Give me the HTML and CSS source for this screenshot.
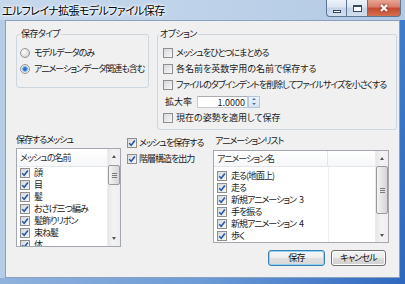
FILE: index.html
```html
<!DOCTYPE html>
<html lang="ja">
<head>
  <meta charset="UTF-8">
  <title>エルフレイナ拡張モデルファイル保存</title>
  <link rel="stylesheet" href="styles.css">
</head>
<body>
  <div class="window">
    <div class="titlebar">
      <span class="title">エルフレイナ拡張モデルファイル保存</span>
      <div class="caption">
        <span class="cap min"><i></i></span>
        <span class="cap max"><i></i></span>
        <span class="cap close">
          <svg viewBox="0 0 12 10"><path d="M3 2 9 8 M9 2 3 8"/></svg>
        </span>
      </div>
    </div>

    <div class="frame">
      <div class="client">
        <!-- 上段 -->
        <div class="top-row">
          <fieldset class="group type">
            <legend>保存タイプ</legend>
            <div class="group-body">
              <div class="row"><span class="radio"></span>モデルデータのみ</div>
              <div class="row"><span class="radio on"></span>アニメーションデータ関連も含む</div>
            </div>
          </fieldset>

          <fieldset class="group options">
            <legend>オプション</legend>
            <div class="group-body">
              <div class="row"><span class="check"></span>メッシュをひとつにまとめる</div>
              <div class="row kanji"><span class="check"></span>各名前を英数字用の名前で保存する</div>
              <div class="row"><span class="check"></span>ファイルのタブインデントを削除してファイルサイズを小さくする</div>
              <div class="row scale">
                <span class="scale-label">拡大率</span>
                <span class="edit">1.0000</span>
                <span class="spin"><i class="up"></i><i class="down"></i></span>
              </div>
              <div class="row kanji"><span class="check"></span>現在の姿勢を適用して保存</div>
            </div>
          </fieldset>
        </div>

        <!-- 下段 -->
        <div class="bottom-row">
          <div class="mesh-col">
            <div class="cap-label">保存するメッシュ</div>
            <div class="listview mesh">
              <div class="lv-main">
                <div class="lv-head"><span class="col1">メッシュの名前</span></div>
                <div class="lv-rows">
                  <div class="lv-row"><span class="check on"><svg viewBox="0 0 8 8"><path d="M1.2 4.2 3.2 6.2 6.9 1.4"/></svg></span>顔</div>
                  <div class="lv-row"><span class="check on"><svg viewBox="0 0 8 8"><path d="M1.2 4.2 3.2 6.2 6.9 1.4"/></svg></span>目</div>
                  <div class="lv-row"><span class="check on"><svg viewBox="0 0 8 8"><path d="M1.2 4.2 3.2 6.2 6.9 1.4"/></svg></span>髪</div>
                  <div class="lv-row"><span class="check on"><svg viewBox="0 0 8 8"><path d="M1.2 4.2 3.2 6.2 6.9 1.4"/></svg></span>おさげ三つ編み</div>
                  <div class="lv-row"><span class="check on"><svg viewBox="0 0 8 8"><path d="M1.2 4.2 3.2 6.2 6.9 1.4"/></svg></span>髪飾りリボン</div>
                  <div class="lv-row"><span class="check on"><svg viewBox="0 0 8 8"><path d="M1.2 4.2 3.2 6.2 6.9 1.4"/></svg></span>束ね髪</div>
                  <div class="lv-row"><span class="check on"><svg viewBox="0 0 8 8"><path d="M1.2 4.2 3.2 6.2 6.9 1.4"/></svg></span>体</div>
                </div>
              </div>
              <div class="vscroll">
                <span class="arrow up"></span>
                <div class="track"><span class="thumb"></span></div>
                <span class="arrow down"></span>
              </div>
            </div>
          </div>

          <div class="mid-col">
            <div class="row"><span class="check on"><svg viewBox="0 0 8 8"><path d="M1.2 4.2 3.2 6.2 6.9 1.4"/></svg></span>メッシュを保存する</div>
            <div class="row"><span class="check on"><svg viewBox="0 0 8 8"><path d="M1.2 4.2 3.2 6.2 6.9 1.4"/></svg></span>階層構造を出力</div>
          </div>

          <div class="anim-col">
            <div class="cap-label">アニメーションリスト</div>
            <div class="listview anim">
              <div class="lv-main">
                <div class="lv-head"><span class="col1">アニメーション名</span><span class="col2"></span></div>
                <div class="lv-rows">
                  <div class="lv-row"><span class="check on"><svg viewBox="0 0 8 8"><path d="M1.2 4.2 3.2 6.2 6.9 1.4"/></svg></span>走る(地面上)</div>
                  <div class="lv-row"><span class="check on"><svg viewBox="0 0 8 8"><path d="M1.2 4.2 3.2 6.2 6.9 1.4"/></svg></span>走る</div>
                  <div class="lv-row"><span class="check on"><svg viewBox="0 0 8 8"><path d="M1.2 4.2 3.2 6.2 6.9 1.4"/></svg></span>新規アニメーション 3</div>
                  <div class="lv-row"><span class="check on"><svg viewBox="0 0 8 8"><path d="M1.2 4.2 3.2 6.2 6.9 1.4"/></svg></span>手を振る</div>
                  <div class="lv-row"><span class="check on"><svg viewBox="0 0 8 8"><path d="M1.2 4.2 3.2 6.2 6.9 1.4"/></svg></span>新規アニメーション 4</div>
                  <div class="lv-row"><span class="check on"><svg viewBox="0 0 8 8"><path d="M1.2 4.2 3.2 6.2 6.9 1.4"/></svg></span>歩く</div>
                </div>
              </div>
              <div class="vscroll">
                <span class="arrow up"></span>
                <div class="track"><span class="thumb"></span></div>
                <span class="arrow down"></span>
              </div>
            </div>
            <div class="buttons">
              <button class="btn default">保存</button>
              <button class="btn">キャンセル</button>
            </div>
          </div>
        </div>
      </div>
    </div>
  </div>
</body>
</html>
```

FILE: styles.css
```css
* {
  margin: 0;
  padding: 0;
  box-sizing: border-box;
}
body {
  width: 405px;
  height: 284px;
  overflow: hidden;
  font-family: "Noto Sans CJK JP", "Noto Sans", sans-serif;
  font-size: 9px;
  line-height: 12px;
  letter-spacing: -1px;
  word-spacing: 2px;
  font-feature-settings: "palt";
  color: #1a1a1a;
}
.window {
  width: 405px;
  height: 284px;
  display: flex;
  flex-direction: column;
}

/* タイトルバー */
.titlebar {
  height: 20px;
  flex: none;
  display: flex;
  align-items: flex-start;
  background: linear-gradient(to right, #c6d8ec, #bcd1e8 60%, #b2c9e4);
}
.title {
  font-size: 11px;
  line-height: 21px;
  letter-spacing: -0.6px;
  padding-left: 2px;
  color: #000;
  white-space: nowrap;
  text-shadow: 0 0 5px #fff, 0 0 3px #fff, 0 0 2px #fff;
}
.caption {
  margin-left: auto;
  margin-right: 4px;
  display: flex;
  height: 17px;
}
.cap {
  height: 17px;
  border: 1px solid #5d7696;
  border-top: none;
  display: flex;
  align-items: center;
  justify-content: center;
  background: linear-gradient(#eef3f9, #dbe5f0 45%, #c3d3e6 50%, #d3dfec);
}
.cap.min {
  width: 21px;
  border-radius: 0 0 0 4px;
}
.cap.max {
  width: 21px;
  border-left: none;
}
.cap.close {
  width: 33px;
  border-left: none;
  border-radius: 0 0 4px 0;
  background: linear-gradient(#eaa594, #d67b68 45%, #c44a33 50%, #d4714f);
}
.cap.min i {
  width: 8px;
  height: 3px;
  margin-top: 6px;
  border: 1px solid #3a4a5e;
  background: #fff;
}
.cap.max i {
  width: 9px;
  height: 7px;
  border: 1px solid #3a4a5e;
  border-top-width: 2px;
  background: #fff;
}
.cap.close svg {
  width: 12px;
  height: 10px;
  fill: none;
  stroke: #fff;
  stroke-width: 2.2;
  filter: drop-shadow(0 0 1px #6a1a10);
}

/* 枠 */
.frame {
  flex: 1;
  display: flex;
  padding: 0 5px 6px 5px;
  background:
    linear-gradient(#3d7dcd, #2e68bf) right top / 5px 100% no-repeat,
    linear-gradient(to right, #8fb2dc, #6c9bd6 50%, #2f68c0) left bottom / 100% 6px no-repeat,
    #b6cbe5;
}
.client {
  flex: 1;
  min-width: 0;
  background: #f0f0f0;
  border: 1px solid #8aa1bd;
  padding: 7px 3px 0 10px;
  display: flex;
  flex-direction: column;
}

/* グループボックス */
.top-row {
  display: flex;
  align-items: flex-start;
  gap: 8px;
}
.group {
  min-width: 0;
  border: 1px solid #ccd6dc;
  border-radius: 3px;
  padding: 0;
}
.group legend {
  line-height: 12px;
  padding: 0 1px;
  margin-left: 3px;
  letter-spacing: -0.6px;
}
.group.type {
  width: 133px;
  flex: none;
}
.group.options {
  width: 240px;
  flex: none;
}
.group.options legend {
  margin-left: 1px;
}
.group-body {
  padding: 5px 0 3px 5px;
}
.group.type .group-body {
  padding: 5px 0 10px 3px;
}
.row {
  height: 16px;
  display: flex;
  align-items: center;
  gap: 3px;
  white-space: nowrap;
}
.row.kanji {
  letter-spacing: 0;
}
.row.scale {
  height: 17px;
  gap: 0;
}
.scale-label {
  width: 34px;
  padding-left: 2px;
  letter-spacing: 0;
}
.edit {
  width: 51px;
  height: 12px;
  line-height: 11px;
  text-align: right;
  padding-right: 2px;
  background: #fff;
  border: 1px solid #c5cbd3;
  border-top-color: #abadb3;
  letter-spacing: 0;
}
.spin {
  width: 12px;
  height: 12px;
  display: flex;
  flex-direction: column;
  border: 1px solid #b6c6d8;
  background: linear-gradient(#eef4fa, #d6e3f0);
}
.spin i {
  flex: 1;
  display: flex;
  align-items: center;
  justify-content: center;
}
.spin i::before {
  content: "";
  border: 2px solid transparent;
  border-left-width: 2.5px;
  border-right-width: 2.5px;
}
.spin .up::before {
  border-top-width: 0;
  border-bottom-color: #4b74a8;
}
.spin .down::before {
  border-bottom-width: 0;
  border-top-color: #4b74a8;
}

/* ラジオ・チェック */
.radio {
  width: 10px;
  height: 10px;
  flex: none;
  border-radius: 50%;
  border: 1px solid #959595;
  background: radial-gradient(circle at 35% 35%, #fdfdfd, #d4d4d4 80%);
  margin-right: 1px;
}
.radio.on {
  background: radial-gradient(circle, #1a56a8 0, #3b84d6 1.6px, #8cbbe8 2.6px, #e4e4e4 3.2px, #f4f4f4 100%);
}
.check {
  width: 10px;
  height: 10px;
  flex: none;
  display: inline-flex;
  align-items: center;
  justify-content: center;
  border: 1px solid #8f8f8f;
  background: linear-gradient(135deg, #d6d8dc, #f7f7f7);
}
.check svg {
  width: 8px;
  height: 8px;
  fill: none;
  stroke: #2b58a6;
  stroke-width: 1.6;
}

/* 下段 */
.bottom-row {
  display: flex;
  align-items: flex-start;
  margin-top: 4px;
}
.cap-label {
  line-height: 12px;
  white-space: nowrap;
}
.mesh-col {
  width: 105px;
  flex: none;
}
.mesh-col .cap-label {
  margin-bottom: 2px;
}
.mid-col {
  width: 86px;
  flex: none;
  margin-left: 6px;
  padding-top: 1px;
}
.mid-col .row {
  gap: 2px;
}
.anim-col {
  width: 176px;
  flex: none;
  padding-top: 1px;
}
.anim-col .cap-label {
  margin-left: 2px;
  margin-bottom: 3px;
}

/* リストビュー */
.listview {
  display: flex;
  background: #fff;
  border: 1px solid #a3a8b0;
  overflow: hidden;
}
.listview.mesh {
  height: 99px;
}
.listview.anim {
  height: 93px;
}
.lv-main {
  flex: 1;
  min-width: 0;
  overflow: hidden;
}
.lv-head {
  display: flex;
  height: 18px;
  line-height: 17px;
  border-bottom: 1px solid #e3e5e8;
  background: linear-gradient(#ffffff, #f6f7f9);
  color: #333;
}
.lv-head .col1 {
  padding-left: 3px;
}
.anim .lv-head {
  height: 16px;
  line-height: 15px;
}
.anim .lv-head .col1 {
  width: 114px;
  border-right: 1px solid #e3e5e8;
}
.anim .lv-rows {
  padding-top: 3px;
  background: linear-gradient(to right, transparent 114px, #eeeeee 114px, #eeeeee 115px, transparent 115px);
  height: 100%;
}
.lv-row {
  height: 12px;
  display: flex;
  align-items: center;
  gap: 4px;
  padding-left: 3px;
  white-space: nowrap;
}

/* スクロールバー */
.vscroll {
  width: 13px;
  flex: none;
  display: flex;
  flex-direction: column;
  border-left: 1px solid #ebebeb;
  background: linear-gradient(to right, #e7e7e7, #f3f3f3 45%, #eeeeee);
}
.arrow {
  height: 15px;
  flex: none;
  display: flex;
  align-items: center;
  justify-content: center;
}
.anim .arrow {
  height: 14px;
}
.arrow::before {
  content: "";
  border: 3px solid transparent;
  border-left-width: 2.5px;
  border-right-width: 2.5px;
}
.arrow.up::before {
  border-top-width: 0;
  border-bottom-color: #555;
}
.arrow.down::before {
  border-bottom-width: 0;
  border-top-color: #555;
}
.track {
  flex: 1;
}
.thumb {
  display: flex;
  align-items: center;
  justify-content: center;
  height: 20px;
  margin: 1px 0 0 0;
  border: 1px solid #9a9a9a;
  border-radius: 2px;
  background: linear-gradient(to right, #f4f4f4, #e4e4e4 50%, #d6d6d6);
}
.anim .thumb {
  height: 48px;
}
.thumb::before {
  content: "";
  width: 5px;
  height: 5px;
  background: repeating-linear-gradient(#7a7a7a 0 1px, transparent 1px 2px);
}

/* ボタン */
.buttons {
  display: flex;
  justify-content: flex-end;
  gap: 6px;
  margin-top: 7px;
  padding-right: 3px;
}
.btn {
  height: 16px;
  font-family: inherit;
  font-size: 9px;
  letter-spacing: -0.8px;
  font-feature-settings: "palt";
  line-height: 14px;
  color: #111;
  border: 1px solid #707070;
  border-radius: 3px;
  background: linear-gradient(#f3f3f3, #ebebeb 50%, #dcdcdc 50%, #d0d0d0);
  box-shadow: inset 0 0 0 1px #fcfcfc;
  width: 55px;
}
.btn.default {
  width: 57px;
  border-color: #3c7fb1;
  box-shadow: inset 0 0 0 1px #8fd2f7;
  background: linear-gradient(#f6f6f6, #eeeeee 50%, #e0e0e0 50%, #d8d8d8);
}
```
